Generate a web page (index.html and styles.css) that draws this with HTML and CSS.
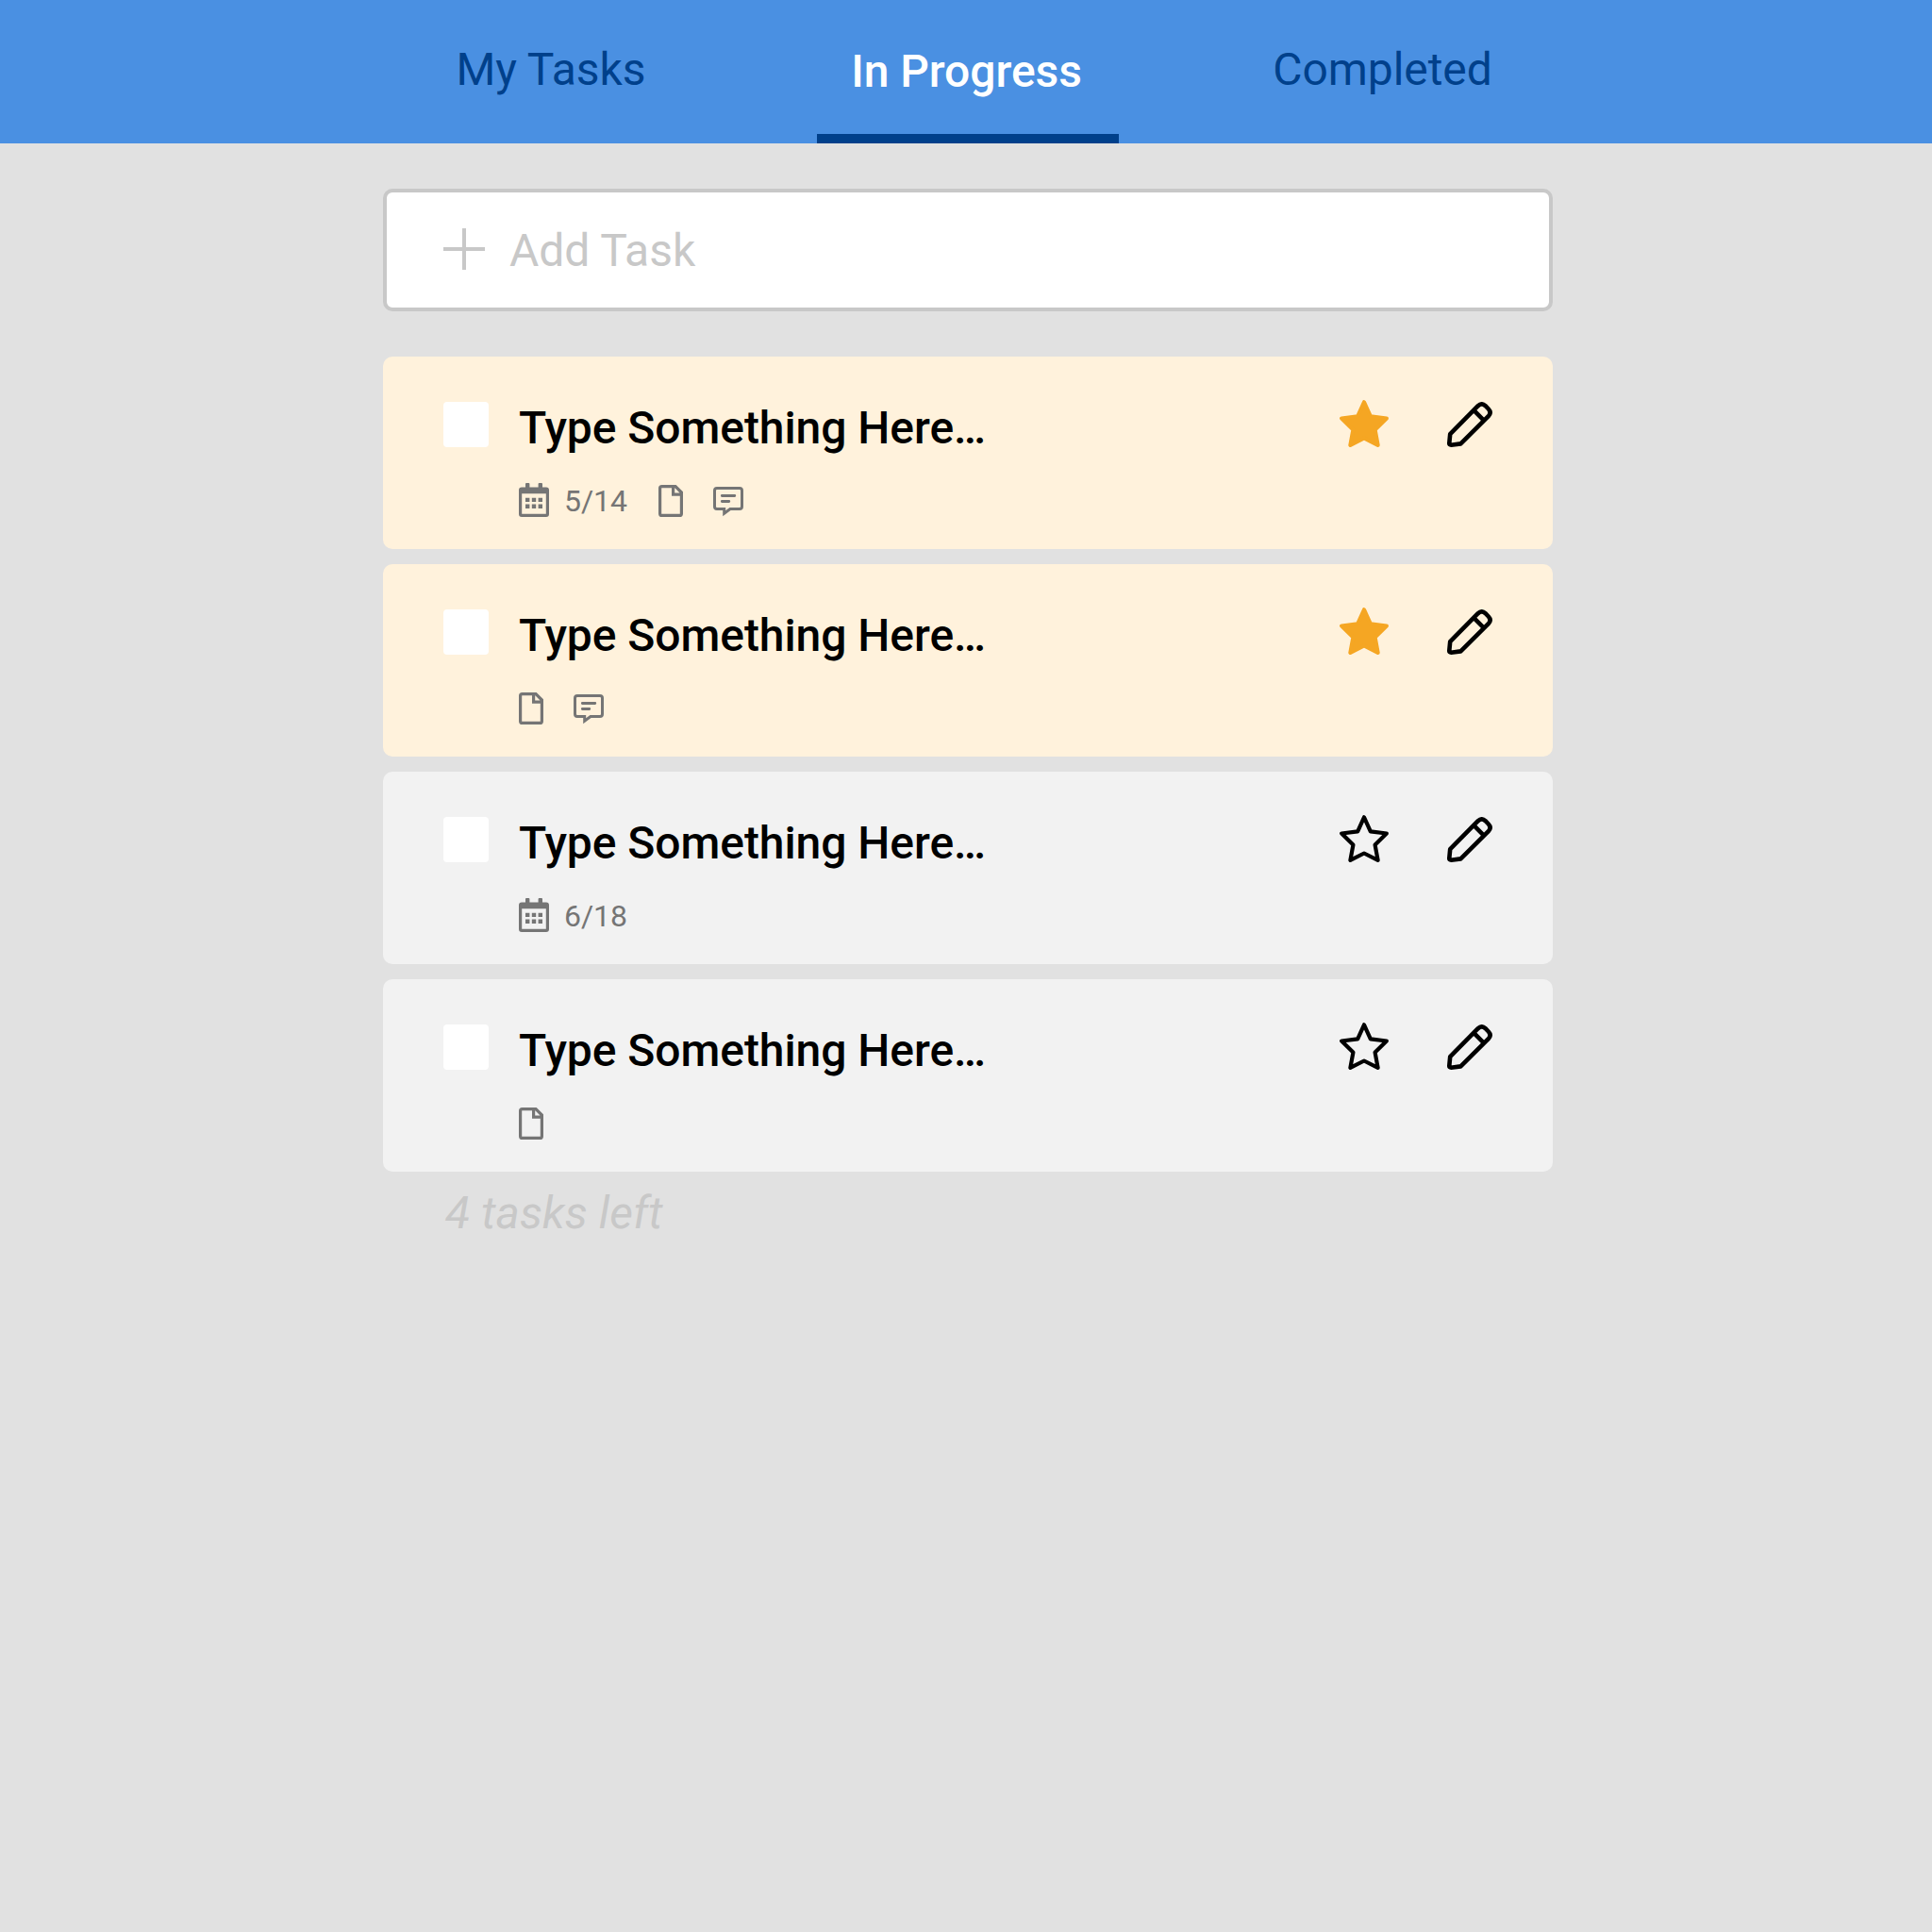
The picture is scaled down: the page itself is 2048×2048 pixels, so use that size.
FILE: index.html
```html
<!DOCTYPE html>
<html lang="en">
<head>
  <meta charset="utf-8">
  <title>Todo List</title>
  <link rel="stylesheet" href="styles.css">
</head>
<body>
  <svg class="sprite" aria-hidden="true">
    <symbol id="plus" viewBox="0 0 44 44"><path d="M22 0V44M0 22H44" fill="none" stroke="currentColor" stroke-width="4"/></symbol>
    <symbol id="star" viewBox="0 0 52 50"><path d="M26 2.3L32.8 17.3L49.8 19.5L37.6 31.6L40.6 47.9L26 40.5L11.4 47.9L14.4 31.6L2.2 19.5L19.2 17.3Z" stroke="currentColor" stroke-width="4.2" stroke-linejoin="round"/></symbol>
    <symbol id="pencil" viewBox="0 0 48 48"><path d="M3.2 34.2L32.8 4.2Q36.7 .6 40.6 4.2L43.8 7.5Q47.4 11.4 43.8 15.2L14.4 44.4L4.2 45.7Q2.2 45.7 2.3 43.8ZM28.5 9.2L38.9 19.6" fill="none" stroke="currentColor" stroke-width="4.6" stroke-linejoin="round"/></symbol>
    <symbol id="calendar" viewBox="0 0 32 36"><path fill="currentColor" fill-rule="evenodd" d="M8 0H10.4Q11.4 0 11.4 1V4.5H20.6V1Q20.6 0 21.6 0H24Q25 0 25 1V4.5H29Q32 4.5 32 7.5V33Q32 36 29 36H3Q0 36 0 33V7.5Q0 4.5 3 4.5H7V1Q7 0 8 0ZM3.2 11.2V32.8H28.8V11.2Z"/><path fill="currentColor" d="M7 15.7h4.4v4.4H7zM13.8 15.7h4.4v4.4h-4.4zM20.6 15.7H25v4.4h-4.4zM7 22.6h4.4V27H7zM13.8 22.6h4.4V27h-4.4zM20.6 22.6H25V27h-4.4z"/></symbol>
    <symbol id="file" viewBox="0 0 26 34"><path d="M3.6 1.6H18L24.4 8V30.4Q24.4 32.4 22.4 32.4H3.6Q1.6 32.4 1.6 30.4V3.6Q1.6 1.6 3.6 1.6ZM15.6 1.6V10.2H24.4" fill="none" stroke="currentColor" stroke-width="3.2"/></symbol>
    <symbol id="comment" viewBox="0 0 32 32"><path d="M4 1.5H28Q30.5 1.5 30.5 4V21Q30.5 23.5 28 23.5H18L11.7 28.3V23.5H4Q1.5 23.5 1.5 21V4Q1.5 1.5 4 1.5Z" fill="none" stroke="currentColor" stroke-width="3"/><path d="M9.3 9.5H22.8M9.3 15.5H16.8" fill="none" stroke="currentColor" stroke-width="2.8" stroke-linecap="round"/></symbol>
  </svg>

  <header class="header">
    <nav class="tabs">
      <a class="tab">My Tasks</a>
      <a class="tab tab--active">In Progress</a>
      <a class="tab">Completed</a>
    </nav>
  </header>

  <main class="content">
    <div class="add-task">
      <svg class="icon-plus"><use href="#plus"/></svg>
      <span>Add Task</span>
    </div>

    <ul class="tasks">
      <li class="task task--starred">
        <span class="checkbox"></span>
        <div class="task-body">
          <h2 class="title">Type Something Here…</h2>
          <div class="meta">
            <span class="date"><svg class="icon-calendar"><use href="#calendar"/></svg>5/14</span>
            <svg class="icon-file"><use href="#file"/></svg>
            <svg class="icon-comment"><use href="#comment"/></svg>
          </div>
        </div>
        <div class="actions">
          <svg class="icon-star"><use href="#star"/></svg>
          <svg class="icon-pencil"><use href="#pencil"/></svg>
        </div>
      </li>
      <li class="task task--starred">
        <span class="checkbox"></span>
        <div class="task-body">
          <h2 class="title">Type Something Here…</h2>
          <div class="meta">
            <svg class="icon-file"><use href="#file"/></svg>
            <svg class="icon-comment"><use href="#comment"/></svg>
          </div>
        </div>
        <div class="actions">
          <svg class="icon-star"><use href="#star"/></svg>
          <svg class="icon-pencil"><use href="#pencil"/></svg>
        </div>
      </li>
      <li class="task">
        <span class="checkbox"></span>
        <div class="task-body">
          <h2 class="title">Type Something Here…</h2>
          <div class="meta">
            <span class="date"><svg class="icon-calendar"><use href="#calendar"/></svg>6/18</span>
          </div>
        </div>
        <div class="actions">
          <svg class="icon-star"><use href="#star"/></svg>
          <svg class="icon-pencil"><use href="#pencil"/></svg>
        </div>
      </li>
      <li class="task">
        <span class="checkbox"></span>
        <div class="task-body">
          <h2 class="title">Type Something Here…</h2>
          <div class="meta">
            <svg class="icon-file"><use href="#file"/></svg>
          </div>
        </div>
        <div class="actions">
          <svg class="icon-star"><use href="#star"/></svg>
          <svg class="icon-pencil"><use href="#pencil"/></svg>
        </div>
      </li>
    </ul>

    <p class="summary">4 tasks left</p>
  </main>
</body>
</html>
```
FILE: styles.css
```css
* {
  box-sizing: border-box;
}

body {
  margin: 0;
  min-height: 100vh;
  background: #e1e1e1;
  font-family: Roboto, "Liberation Sans", sans-serif;
  font-size: 48px;
  line-height: 56px;
  letter-spacing: -0.06px;
}

svg {
  display: block;
  flex: none;
}

.sprite {
  display: none;
}

.header {
  height: 152px;
  background: #4a90e2;
}

.tabs {
  display: flex;
  justify-content: center;
  gap: 122px;
  height: 100%;
  padding-left: 4px;
}

.tab {
  width: 320px;
  padding-top: 46px;
  color: #00408b;
  text-align: center;
}

.tab:last-child {
  padding-right: 5px;
}

.tab--active {
  padding-top: 48px;
  padding-right: 3px;
  border-bottom: 10px solid #00408b;
  color: #fff;
  font-weight: 500;
}

.content {
  width: 1240px;
  margin-left: 406px;
  padding-top: 48px;
}

.add-task {
  display: flex;
  align-items: center;
  gap: 26px;
  height: 130px;
  padding: 2px 60px 0;
  border: 4px solid #c8c8c8;
  border-radius: 10px;
  background: #fff;
  color: #c8c8c8;
}

.tasks {
  display: flex;
  flex-direction: column;
  gap: 16px;
  margin: 48px 0 0;
  padding: 0;
  list-style: none;
}

.task {
  display: flex;
  align-items: flex-start;
  height: 204px;
  padding: 48px 64px 0;
  border-radius: 10px;
  background: #f2f2f2;
}

.task--starred {
  background: #fff2dc;
}

.checkbox {
  flex: none;
  width: 48px;
  height: 48px;
  border-radius: 4px;
  background: #fff;
}

.task-body {
  flex: 1;
  margin-left: 32px;
}

.title {
  margin: 0;
  font-size: 48px;
  font-weight: 500;
  line-height: 56px;
}

.meta {
  display: flex;
  align-items: flex-start;
  gap: 32px;
  height: 36px;
  margin-top: 30px;
  color: #757575;
  font-size: 32px;
  line-height: 38px;
}

.date {
  display: flex;
  gap: 16px;
  width: 116px;
}

.actions {
  display: flex;
  gap: 62px;
}

.icon-plus {
  width: 44px;
  height: 44px;
  margin-bottom: 4px;
}

.icon-star {
  width: 52px;
  height: 50px;
  margin-top: -2px;
  fill: none;
}

.task--starred .icon-star {
  color: #f5a623;
  fill: currentColor;
}

.icon-pencil {
  width: 48px;
  height: 48px;
}

.icon-calendar {
  width: 32px;
  height: 36px;
}

.icon-file {
  width: 26px;
  height: 34px;
  margin-top: 2px;
}

.icon-comment {
  width: 32px;
  height: 32px;
  margin-top: 4px;
}

.summary {
  margin: 16px 0 0 66px;
  color: #c8c8c8;
  font-style: italic;
  letter-spacing: 0.1px;
}
```
